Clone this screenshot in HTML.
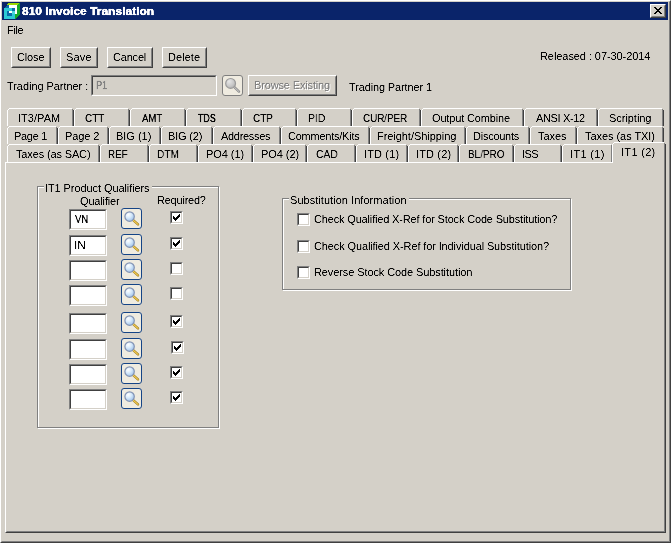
<!DOCTYPE html>
<html><head><meta charset="utf-8"><title>810 Invoice Translation</title>
<style>
html,body{margin:0;padding:0;}
body{width:671px;height:543px;overflow:hidden;background:#D4D0C8;position:relative;font-family:"Liberation Sans",sans-serif;font-size:11px;color:#000;}
span.t{will-change:transform;filter:url(#thr);}
div,span{position:absolute;box-sizing:border-box;white-space:nowrap;}
.t{line-height:13px;height:13px;}
.btn{background:#D4D0C8;border:1px solid;border-color:#fff #404040 #404040 #fff;}
.btn:before{content:"";position:absolute;left:0;top:0;right:0;bottom:0;border:1px solid;border-color:#D4D0C8 #808080 #808080 #D4D0C8;}
.sunk{background:#fff;border:1px solid;border-color:#808080 #fff #fff #808080;}
.sunk:before{content:"";position:absolute;left:0;top:0;right:0;bottom:0;border:1px solid;border-color:#404040 #D4D0C8 #D4D0C8 #404040;}
.tab{height:18px;background:#D4D0C8;}
.tab i{position:absolute;display:block;}
.grp{border:1px solid #808080;box-shadow:1px 1px 0 #fff, inset 1px 1px 0 #fff;}
.cb{width:13px;height:13px;}
.mag{width:21px;height:21px;border:1px solid #154486;border-radius:3px;background:#EFEBE0;}
.mag svg{position:absolute;left:-1px;top:-1px;}
</style></head><body>
<svg width="0" height="0" style="position:absolute"><filter id="thr" x="-10%" y="-20%" width="120%" height="140%" color-interpolation-filters="sRGB"><feComponentTransfer><feFuncA type="table" tableValues="0 0.1 0.95 1"/></feComponentTransfer></filter><radialGradient id="gb" cx="0.35" cy="0.3" r="0.8"><stop offset="0" stop-color="#FFFFFF"/><stop offset="0.45" stop-color="#D6E9FB"/><stop offset="1" stop-color="#94BAE6"/></radialGradient><radialGradient id="gg" cx="0.35" cy="0.3" r="0.8"><stop offset="0" stop-color="#E6E6E6"/><stop offset="0.6" stop-color="#C8C8C8"/><stop offset="1" stop-color="#ABABAB"/></radialGradient></svg>

<div style="left:0;top:0;width:671px;height:543px;border:1px solid;border-color:#fff #404040 #404040 #fff;"></div>
<div style="left:1px;top:1px;width:669px;height:541px;border:1px solid;border-color:#D4D0C8 #808080 #808080 #D4D0C8;"></div>
<div style="left:2px;top:2px;width:666px;height:18px;background:#0A246A;"></div>
<svg style="position:absolute;left:4px;top:3px" width="16" height="16" viewBox="0 0 16 16" shape-rendering="crispEdges">
<polygon points="0,5 3,2 5,2 5,5" fill="#0A6CA8"/>
<polygon points="3,2 4,0 15,0 13,2" fill="#9BD800"/>
<polygon points="13,2 15,0 16,0 16,11 11,16 11,11 13,11" fill="#15A82A"/>
<rect x="0" y="5" width="11" height="11" fill="#2CCBD6"/>
<rect x="5" y="2" width="8" height="3" fill="#fff"/>
<rect x="11" y="5" width="2" height="6" fill="#fff"/>
<rect x="3" y="8" width="5" height="5" fill="#0A6CA8"/>
<rect x="8" y="5" width="3" height="3" fill="#0A6CA8"/>
<rect x="8" y="8" width="3" height="3" fill="#4FD6DE"/>
<rect x="5" y="8" width="3" height="2" fill="#fff"/>
</svg>
<span class="t" style="left:22.00px;top:5px;transform:scaleX(1.0917);transform-origin:0 0;font-weight:bold;color:#fff;-webkit-text-stroke:0.3px #fff;">810 Invoice Translation</span>
<div class="btn" style="left:650px;top:4px;width:16px;height:14px;"></div>
<svg style="position:absolute;left:654px;top:7px" width="8" height="7" viewBox="0 0 8 7" shape-rendering="crispEdges"><path d="M0 0h2v1h1v1h2v-1h1v-1h2v1h-1v1h-1v1h-1v1h1v1h1v1h1v1h-2v-1h-1v-1h-2v1h-1v1h-2v-1h1v-1h1v-1h1v-1h-1v-1h-1v-1h-1z" fill="#000"/></svg>
<span class="t" style="left:7.00px;top:24px;letter-spacing:-0.333px;">File</span>
<div class="btn" style="left:11px;top:47px;width:40px;height:21px;"></div>
<span class="t" style="left:16.50px;top:51px;letter-spacing:-0.153px;">Close</span>
<div class="btn" style="left:60px;top:47px;width:38px;height:21px;"></div>
<span class="t" style="left:65.80px;top:51px;letter-spacing:0.207px;">Save</span>
<div class="btn" style="left:107px;top:47px;width:46px;height:21px;"></div>
<span class="t" style="left:112.70px;top:51px;letter-spacing:-0.186px;">Cancel</span>
<div class="btn" style="left:162px;top:47px;width:45px;height:21px;"></div>
<span class="t" style="left:168.00px;top:51px;letter-spacing:0.046px;">Delete</span>
<span class="t" style="left:540.00px;top:50px;letter-spacing:-0.073px;">Released : 07-30-2014</span>
<span class="t" style="left:7.00px;top:80px;letter-spacing:-0.053px;">Trading Partner :</span>
<div class="sunk" style="left:91px;top:75px;width:126px;height:21px;background:#D4D0C8;"></div>
<span class="t" style="left:96.00px;top:79px;transform:scaleX(0.8333);transform-origin:0 0;-webkit-text-stroke:0.27px;color:#808080;">P1</span>
<div class="mag" style="left:222px;top:75px;border-color:#7F7F7F;"><svg width="21" height="21" viewBox="0 0 21 21"><line x1="12.4" y1="12.2" x2="17" y2="16.6" stroke="#8C8C8C" stroke-width="2.4" stroke-linecap="round"/><line x1="12.4" y1="12.2" x2="17" y2="16.6" stroke="#D0D0D0" stroke-width="1" stroke-linecap="round"/><circle cx="8.6" cy="8.4" r="4.9" fill="url(#gg)" stroke="#9A9A9A" stroke-width="1.2"/></svg></div>
<div class="btn" style="left:248px;top:75px;width:89px;height:21px;"></div>
<span class="t" style="left:254.00px;top:79px;letter-spacing:-0.148px;color:#808080;text-shadow:1px 1px 0 #fff;">Browse Existing</span>
<span class="t" style="left:349.00px;top:81px;letter-spacing:-0.135px;">Trading Partner 1</span>
<div class="tab" style="left:7px;top:108px;width:67px;height:18px;"><i style="left:0;top:2px;width:1px;bottom:0px;background:#fff"></i><i style="left:1px;top:1px;width:1px;height:1px;background:#fff"></i><i style="left:2px;top:0;right:2px;height:1px;background:#fff"></i><i style="right:1px;top:1px;width:1px;bottom:0;background:#808080"></i><i style="right:0;top:2px;width:1px;bottom:0;background:#404040"></i></div>
<span class="t" style="left:18.00px;top:112px;letter-spacing:0.038px;z-index:6;">IT3/PAM</span>
<div class="tab" style="left:74px;top:108px;width:56px;height:18px;"><i style="left:0;top:2px;width:1px;bottom:0px;background:#fff"></i><i style="left:1px;top:1px;width:1px;height:1px;background:#fff"></i><i style="left:2px;top:0;right:2px;height:1px;background:#fff"></i><i style="right:1px;top:1px;width:1px;bottom:0;background:#808080"></i><i style="right:0;top:2px;width:1px;bottom:0;background:#404040"></i></div>
<span class="t" style="left:84.50px;top:112px;transform:scaleX(0.9000);transform-origin:0 0;-webkit-text-stroke:0.16px;z-index:6;">CTT</span>
<div class="tab" style="left:130px;top:108px;width:56px;height:18px;"><i style="left:0;top:2px;width:1px;bottom:0px;background:#fff"></i><i style="left:1px;top:1px;width:1px;height:1px;background:#fff"></i><i style="left:2px;top:0;right:2px;height:1px;background:#fff"></i><i style="right:1px;top:1px;width:1px;bottom:0;background:#808080"></i><i style="right:0;top:2px;width:1px;bottom:0;background:#404040"></i></div>
<span class="t" style="left:142.00px;top:112px;transform:scaleX(0.8696);transform-origin:0 0;-webkit-text-stroke:0.21px;z-index:6;">AMT</span>
<div class="tab" style="left:186px;top:108px;width:56px;height:18px;"><i style="left:0;top:2px;width:1px;bottom:0px;background:#fff"></i><i style="left:1px;top:1px;width:1px;height:1px;background:#fff"></i><i style="left:2px;top:0;right:2px;height:1px;background:#fff"></i><i style="right:1px;top:1px;width:1px;bottom:0;background:#808080"></i><i style="right:0;top:2px;width:1px;bottom:0;background:#404040"></i></div>
<span class="t" style="left:198.30px;top:112px;transform:scaleX(0.8042);transform-origin:0 0;-webkit-text-stroke:0.31px;z-index:6;">TDS</span>
<div class="tab" style="left:242px;top:108px;width:55px;height:18px;"><i style="left:0;top:2px;width:1px;bottom:0px;background:#fff"></i><i style="left:1px;top:1px;width:1px;height:1px;background:#fff"></i><i style="left:2px;top:0;right:2px;height:1px;background:#fff"></i><i style="right:1px;top:1px;width:1px;bottom:0;background:#808080"></i><i style="right:0;top:2px;width:1px;bottom:0;background:#404040"></i></div>
<span class="t" style="left:252.80px;top:112px;transform:scaleX(0.9000);transform-origin:0 0;-webkit-text-stroke:0.16px;z-index:6;">CTP</span>
<div class="tab" style="left:297px;top:108px;width:55px;height:18px;"><i style="left:0;top:2px;width:1px;bottom:0px;background:#fff"></i><i style="left:1px;top:1px;width:1px;height:1px;background:#fff"></i><i style="left:2px;top:0;right:2px;height:1px;background:#fff"></i><i style="right:1px;top:1px;width:1px;bottom:0;background:#808080"></i><i style="right:0;top:2px;width:1px;bottom:0;background:#404040"></i></div>
<span class="t" style="left:308.00px;top:112px;transform:scaleX(0.9412);transform-origin:0 0;-webkit-text-stroke:0.09px;z-index:6;">PID</span>
<div class="tab" style="left:352px;top:108px;width:69px;height:18px;"><i style="left:0;top:2px;width:1px;bottom:0px;background:#fff"></i><i style="left:1px;top:1px;width:1px;height:1px;background:#fff"></i><i style="left:2px;top:0;right:2px;height:1px;background:#fff"></i><i style="right:1px;top:1px;width:1px;bottom:0;background:#808080"></i><i style="right:0;top:2px;width:1px;bottom:0;background:#404040"></i></div>
<span class="t" style="left:363.00px;top:112px;transform:scaleX(0.8929);transform-origin:0 0;-webkit-text-stroke:0.17px;z-index:6;">CUR/PER</span>
<div class="tab" style="left:421px;top:108px;width:103px;height:18px;"><i style="left:0;top:2px;width:1px;bottom:0px;background:#fff"></i><i style="left:1px;top:1px;width:1px;height:1px;background:#fff"></i><i style="left:2px;top:0;right:2px;height:1px;background:#fff"></i><i style="right:1px;top:1px;width:1px;bottom:0;background:#808080"></i><i style="right:0;top:2px;width:1px;bottom:0;background:#404040"></i></div>
<span class="t" style="left:432.00px;top:112px;letter-spacing:-0.154px;z-index:6;">Output Combine</span>
<div class="tab" style="left:524px;top:108px;width:74px;height:18px;"><i style="left:0;top:2px;width:1px;bottom:0px;background:#fff"></i><i style="left:1px;top:1px;width:1px;height:1px;background:#fff"></i><i style="left:2px;top:0;right:2px;height:1px;background:#fff"></i><i style="right:1px;top:1px;width:1px;bottom:0;background:#808080"></i><i style="right:0;top:2px;width:1px;bottom:0;background:#404040"></i></div>
<span class="t" style="left:536.00px;top:112px;letter-spacing:-0.346px;z-index:6;">ANSI X-12</span>
<div class="tab" style="left:598px;top:108px;width:66px;height:18px;"><i style="left:0;top:2px;width:1px;bottom:0px;background:#fff"></i><i style="left:1px;top:1px;width:1px;height:1px;background:#fff"></i><i style="left:2px;top:0;right:2px;height:1px;background:#fff"></i><i style="right:1px;top:1px;width:1px;bottom:0;background:#808080"></i><i style="right:0;top:2px;width:1px;bottom:0;background:#404040"></i></div>
<span class="t" style="left:608.60px;top:112px;letter-spacing:-0.039px;z-index:6;">Scripting</span>
<div class="tab" style="left:7px;top:126px;width:51px;height:18px;"><i style="left:0;top:2px;width:1px;bottom:0px;background:#fff"></i><i style="left:1px;top:1px;width:1px;height:1px;background:#fff"></i><i style="left:2px;top:0;right:2px;height:1px;background:#fff"></i><i style="right:1px;top:1px;width:1px;bottom:0;background:#808080"></i><i style="right:0;top:2px;width:1px;bottom:0;background:#404040"></i></div>
<span class="t" style="left:14.00px;top:130px;letter-spacing:-0.292px;z-index:6;">Page 1</span>
<div class="tab" style="left:58px;top:126px;width:51px;height:18px;"><i style="left:0;top:2px;width:1px;bottom:0px;background:#fff"></i><i style="left:1px;top:1px;width:1px;height:1px;background:#fff"></i><i style="left:2px;top:0;right:2px;height:1px;background:#fff"></i><i style="right:1px;top:1px;width:1px;bottom:0;background:#808080"></i><i style="right:0;top:2px;width:1px;bottom:0;background:#404040"></i></div>
<span class="t" style="left:64.50px;top:130px;letter-spacing:-0.124px;z-index:6;">Page 2</span>
<div class="tab" style="left:109px;top:126px;width:52px;height:18px;"><i style="left:0;top:2px;width:1px;bottom:0px;background:#fff"></i><i style="left:1px;top:1px;width:1px;height:1px;background:#fff"></i><i style="left:2px;top:0;right:2px;height:1px;background:#fff"></i><i style="right:1px;top:1px;width:1px;bottom:0;background:#808080"></i><i style="right:0;top:2px;width:1px;bottom:0;background:#404040"></i></div>
<span class="t" style="left:116.00px;top:130px;letter-spacing:-0.012px;z-index:6;">BIG (1)</span>
<div class="tab" style="left:161px;top:126px;width:52px;height:18px;"><i style="left:0;top:2px;width:1px;bottom:0px;background:#fff"></i><i style="left:1px;top:1px;width:1px;height:1px;background:#fff"></i><i style="left:2px;top:0;right:2px;height:1px;background:#fff"></i><i style="right:1px;top:1px;width:1px;bottom:0;background:#808080"></i><i style="right:0;top:2px;width:1px;bottom:0;background:#404040"></i></div>
<span class="t" style="left:168.00px;top:130px;letter-spacing:-0.167px;z-index:6;">BIG (2)</span>
<div class="tab" style="left:213px;top:126px;width:68px;height:18px;"><i style="left:0;top:2px;width:1px;bottom:0px;background:#fff"></i><i style="left:1px;top:1px;width:1px;height:1px;background:#fff"></i><i style="left:2px;top:0;right:2px;height:1px;background:#fff"></i><i style="right:1px;top:1px;width:1px;bottom:0;background:#808080"></i><i style="right:0;top:2px;width:1px;bottom:0;background:#404040"></i></div>
<span class="t" style="left:220.70px;top:130px;letter-spacing:-0.307px;z-index:6;">Addresses</span>
<div class="tab" style="left:281px;top:126px;width:89px;height:18px;"><i style="left:0;top:2px;width:1px;bottom:0px;background:#fff"></i><i style="left:1px;top:1px;width:1px;height:1px;background:#fff"></i><i style="left:2px;top:0;right:2px;height:1px;background:#fff"></i><i style="right:1px;top:1px;width:1px;bottom:0;background:#808080"></i><i style="right:0;top:2px;width:1px;bottom:0;background:#404040"></i></div>
<span class="t" style="left:287.80px;top:130px;letter-spacing:-0.238px;z-index:6;">Comments/Kits</span>
<div class="tab" style="left:370px;top:126px;width:96px;height:18px;"><i style="left:0;top:2px;width:1px;bottom:0px;background:#fff"></i><i style="left:1px;top:1px;width:1px;height:1px;background:#fff"></i><i style="left:2px;top:0;right:2px;height:1px;background:#fff"></i><i style="right:1px;top:1px;width:1px;bottom:0;background:#808080"></i><i style="right:0;top:2px;width:1px;bottom:0;background:#404040"></i></div>
<span class="t" style="left:377.20px;top:130px;letter-spacing:-0.051px;z-index:6;">Freight/Shipping</span>
<div class="tab" style="left:466px;top:126px;width:64px;height:18px;"><i style="left:0;top:2px;width:1px;bottom:0px;background:#fff"></i><i style="left:1px;top:1px;width:1px;height:1px;background:#fff"></i><i style="left:2px;top:0;right:2px;height:1px;background:#fff"></i><i style="right:1px;top:1px;width:1px;bottom:0;background:#808080"></i><i style="right:0;top:2px;width:1px;bottom:0;background:#404040"></i></div>
<span class="t" style="left:473.20px;top:130px;letter-spacing:-0.250px;z-index:6;">Discounts</span>
<div class="tab" style="left:530px;top:126px;width:47px;height:18px;"><i style="left:0;top:2px;width:1px;bottom:0px;background:#fff"></i><i style="left:1px;top:1px;width:1px;height:1px;background:#fff"></i><i style="left:2px;top:0;right:2px;height:1px;background:#fff"></i><i style="right:1px;top:1px;width:1px;bottom:0;background:#808080"></i><i style="right:0;top:2px;width:1px;bottom:0;background:#404040"></i></div>
<span class="t" style="left:538.10px;top:130px;letter-spacing:-0.040px;z-index:6;">Taxes</span>
<div class="tab" style="left:577px;top:126px;width:87px;height:18px;"><i style="left:0;top:2px;width:1px;bottom:0px;background:#fff"></i><i style="left:1px;top:1px;width:1px;height:1px;background:#fff"></i><i style="left:2px;top:0;right:2px;height:1px;background:#fff"></i><i style="right:1px;top:1px;width:1px;bottom:0;background:#808080"></i><i style="right:0;top:2px;width:1px;bottom:0;background:#404040"></i></div>
<span class="t" style="left:585.40px;top:130px;letter-spacing:-0.053px;z-index:6;">Taxes (as TXI)</span>
<div class="tab" style="left:7px;top:144px;width:93px;height:18px;"><i style="left:0;top:2px;width:1px;bottom:0px;background:#fff"></i><i style="left:1px;top:1px;width:1px;height:1px;background:#fff"></i><i style="left:2px;top:0;right:2px;height:1px;background:#fff"></i><i style="right:1px;top:1px;width:1px;bottom:0;background:#808080"></i><i style="right:0;top:2px;width:1px;bottom:0;background:#404040"></i></div>
<span class="t" style="left:16.00px;top:148px;letter-spacing:-0.142px;z-index:6;">Taxes (as SAC)</span>
<div class="tab" style="left:100px;top:144px;width:49px;height:18px;"><i style="left:0;top:2px;width:1px;bottom:0px;background:#fff"></i><i style="left:1px;top:1px;width:1px;height:1px;background:#fff"></i><i style="left:2px;top:0;right:2px;height:1px;background:#fff"></i><i style="right:1px;top:1px;width:1px;bottom:0;background:#808080"></i><i style="right:0;top:2px;width:1px;bottom:0;background:#404040"></i></div>
<span class="t" style="left:108.00px;top:148px;transform:scaleX(0.8935);transform-origin:0 0;-webkit-text-stroke:0.17px;z-index:6;">REF</span>
<div class="tab" style="left:149px;top:144px;width:49px;height:18px;"><i style="left:0;top:2px;width:1px;bottom:0px;background:#fff"></i><i style="left:1px;top:1px;width:1px;height:1px;background:#fff"></i><i style="left:2px;top:0;right:2px;height:1px;background:#fff"></i><i style="right:1px;top:1px;width:1px;bottom:0;background:#808080"></i><i style="right:0;top:2px;width:1px;bottom:0;background:#404040"></i></div>
<span class="t" style="left:156.80px;top:148px;transform:scaleX(0.9202);transform-origin:0 0;-webkit-text-stroke:0.13px;z-index:6;">DTM</span>
<div class="tab" style="left:198px;top:144px;width:55px;height:18px;"><i style="left:0;top:2px;width:1px;bottom:0px;background:#fff"></i><i style="left:1px;top:1px;width:1px;height:1px;background:#fff"></i><i style="left:2px;top:0;right:2px;height:1px;background:#fff"></i><i style="right:1px;top:1px;width:1px;bottom:0;background:#808080"></i><i style="right:0;top:2px;width:1px;bottom:0;background:#404040"></i></div>
<span class="t" style="left:205.70px;top:148px;letter-spacing:-0.063px;z-index:6;">PO4 (1)</span>
<div class="tab" style="left:253px;top:144px;width:54px;height:18px;"><i style="left:0;top:2px;width:1px;bottom:0px;background:#fff"></i><i style="left:1px;top:1px;width:1px;height:1px;background:#fff"></i><i style="left:2px;top:0;right:2px;height:1px;background:#fff"></i><i style="right:1px;top:1px;width:1px;bottom:0;background:#808080"></i><i style="right:0;top:2px;width:1px;bottom:0;background:#404040"></i></div>
<span class="t" style="left:260.80px;top:148px;letter-spacing:-0.063px;z-index:6;">PO4 (2)</span>
<div class="tab" style="left:307px;top:144px;width:49px;height:18px;"><i style="left:0;top:2px;width:1px;bottom:0px;background:#fff"></i><i style="left:1px;top:1px;width:1px;height:1px;background:#fff"></i><i style="left:2px;top:0;right:2px;height:1px;background:#fff"></i><i style="right:1px;top:1px;width:1px;bottom:0;background:#808080"></i><i style="right:0;top:2px;width:1px;bottom:0;background:#404040"></i></div>
<span class="t" style="left:315.70px;top:148px;transform:scaleX(0.9376);transform-origin:0 0;-webkit-text-stroke:0.10px;z-index:6;">CAD</span>
<div class="tab" style="left:356px;top:144px;width:52px;height:18px;"><i style="left:0;top:2px;width:1px;bottom:0px;background:#fff"></i><i style="left:1px;top:1px;width:1px;height:1px;background:#fff"></i><i style="left:2px;top:0;right:2px;height:1px;background:#fff"></i><i style="right:1px;top:1px;width:1px;bottom:0;background:#808080"></i><i style="right:0;top:2px;width:1px;bottom:0;background:#404040"></i></div>
<span class="t" style="left:363.80px;top:148px;letter-spacing:0.140px;z-index:6;">ITD (1)</span>
<div class="tab" style="left:408px;top:144px;width:51px;height:18px;"><i style="left:0;top:2px;width:1px;bottom:0px;background:#fff"></i><i style="left:1px;top:1px;width:1px;height:1px;background:#fff"></i><i style="left:2px;top:0;right:2px;height:1px;background:#fff"></i><i style="right:1px;top:1px;width:1px;bottom:0;background:#808080"></i><i style="right:0;top:2px;width:1px;bottom:0;background:#404040"></i></div>
<span class="t" style="left:415.90px;top:148px;letter-spacing:0.140px;z-index:6;">ITD (2)</span>
<div class="tab" style="left:459px;top:144px;width:55px;height:18px;"><i style="left:0;top:2px;width:1px;bottom:0px;background:#fff"></i><i style="left:1px;top:1px;width:1px;height:1px;background:#fff"></i><i style="left:2px;top:0;right:2px;height:1px;background:#fff"></i><i style="right:1px;top:1px;width:1px;bottom:0;background:#808080"></i><i style="right:0;top:2px;width:1px;bottom:0;background:#404040"></i></div>
<span class="t" style="left:468.10px;top:148px;transform:scaleX(0.9054);transform-origin:0 0;-webkit-text-stroke:0.15px;z-index:6;">BL/PRO</span>
<div class="tab" style="left:514px;top:144px;width:48px;height:18px;"><i style="left:0;top:2px;width:1px;bottom:0px;background:#fff"></i><i style="left:1px;top:1px;width:1px;height:1px;background:#fff"></i><i style="left:2px;top:0;right:2px;height:1px;background:#fff"></i><i style="right:1px;top:1px;width:1px;bottom:0;background:#808080"></i><i style="right:0;top:2px;width:1px;bottom:0;background:#404040"></i></div>
<span class="t" style="left:522.00px;top:148px;letter-spacing:-0.580px;z-index:6;">ISS</span>
<div class="tab" style="left:562px;top:144px;width:51px;height:18px;"><i style="left:0;top:2px;width:1px;bottom:0px;background:#fff"></i><i style="left:1px;top:1px;width:1px;height:1px;background:#fff"></i><i style="left:2px;top:0;right:2px;height:1px;background:#fff"></i><i style="right:1px;top:1px;width:1px;bottom:0;background:#808080"></i><i style="right:0;top:2px;width:1px;bottom:0;background:#404040"></i></div>
<span class="t" style="left:569.70px;top:148px;letter-spacing:0.333px;z-index:6;">IT1 (1)</span>
<div style="left:5px;top:162px;width:661px;height:371px;border:1px solid;border-color:#fff #404040 #404040 #fff;"></div>
<div style="left:6px;top:163px;width:659px;height:369px;border:1px solid;border-color:#D4D0C8 #808080 #808080 #D4D0C8;"></div>
<div class="tab" style="left:612px;top:142px;width:54px;height:22px;z-index:5;"><i style="left:0;top:2px;width:1px;bottom:1px;background:#fff"></i><i style="left:1px;top:1px;width:1px;height:1px;background:#fff"></i><i style="left:2px;top:0;right:2px;height:1px;background:#fff"></i><i style="right:1px;top:1px;width:1px;bottom:0;background:#808080"></i><i style="right:0;top:2px;width:1px;bottom:0;background:#404040"></i></div>
<span class="t" style="left:621.00px;top:146px;letter-spacing:0.308px;z-index:6;">IT1 (2)</span>
<div class="grp" style="left:37px;top:186px;width:182px;height:242px;"></div>
<div style="left:44px;top:184px;width:108px;height:6px;background:#D4D0C8;"></div>
<span class="t" style="left:45.00px;top:182px;letter-spacing:-0.084px;">IT1 Product Qualifiers</span>
<span class="t" style="left:80.00px;top:195px;letter-spacing:-0.154px;">Qualifier</span>
<span class="t" style="left:157.00px;top:194px;letter-spacing:-0.221px;">Required?</span>
<div class="sunk" style="left:69px;top:209px;width:38px;height:21px;"></div>
<div class="mag" style="left:121px;top:208px;"><svg width="21" height="21" viewBox="0 0 21 21"><line x1="12.2" y1="12.2" x2="17" y2="16.4" stroke="#9A7A20" stroke-width="2.4" stroke-linecap="round"/><line x1="12.2" y1="12.2" x2="17" y2="16.4" stroke="#F4CC50" stroke-width="1.2" stroke-linecap="round"/><circle cx="8.6" cy="8.6" r="4.7" fill="url(#gb)" stroke="#8494B4" stroke-width="1.2"/></svg></div>
<div class="sunk cb" style="left:170px;top:211px;"><svg style="position:absolute;left:2px;top:2px" width="7" height="7" viewBox="0 0 7 7" shape-rendering="crispEdges"><path d="M6 0h1v3h-1zM5 1h1v3h-1zM4 2h1v3h-1zM3 3h1v3h-1zM2 4h1v3h-1zM1 3h1v3h-1zM0 2h1v3h-1z" fill="#000"/></svg></div>
<div class="sunk" style="left:69px;top:235px;width:38px;height:21px;"></div>
<div class="mag" style="left:121px;top:234px;"><svg width="21" height="21" viewBox="0 0 21 21"><line x1="12.2" y1="12.2" x2="17" y2="16.4" stroke="#9A7A20" stroke-width="2.4" stroke-linecap="round"/><line x1="12.2" y1="12.2" x2="17" y2="16.4" stroke="#F4CC50" stroke-width="1.2" stroke-linecap="round"/><circle cx="8.6" cy="8.6" r="4.7" fill="url(#gb)" stroke="#8494B4" stroke-width="1.2"/></svg></div>
<div class="sunk cb" style="left:170px;top:237px;"><svg style="position:absolute;left:2px;top:2px" width="7" height="7" viewBox="0 0 7 7" shape-rendering="crispEdges"><path d="M6 0h1v3h-1zM5 1h1v3h-1zM4 2h1v3h-1zM3 3h1v3h-1zM2 4h1v3h-1zM1 3h1v3h-1zM0 2h1v3h-1z" fill="#000"/></svg></div>
<div class="sunk" style="left:69px;top:260px;width:38px;height:21px;"></div>
<div class="mag" style="left:121px;top:259px;"><svg width="21" height="21" viewBox="0 0 21 21"><line x1="12.2" y1="12.2" x2="17" y2="16.4" stroke="#9A7A20" stroke-width="2.4" stroke-linecap="round"/><line x1="12.2" y1="12.2" x2="17" y2="16.4" stroke="#F4CC50" stroke-width="1.2" stroke-linecap="round"/><circle cx="8.6" cy="8.6" r="4.7" fill="url(#gb)" stroke="#8494B4" stroke-width="1.2"/></svg></div>
<div class="sunk cb" style="left:170px;top:262px;"></div>
<div class="sunk" style="left:69px;top:285px;width:38px;height:21px;"></div>
<div class="mag" style="left:121px;top:284px;"><svg width="21" height="21" viewBox="0 0 21 21"><line x1="12.2" y1="12.2" x2="17" y2="16.4" stroke="#9A7A20" stroke-width="2.4" stroke-linecap="round"/><line x1="12.2" y1="12.2" x2="17" y2="16.4" stroke="#F4CC50" stroke-width="1.2" stroke-linecap="round"/><circle cx="8.6" cy="8.6" r="4.7" fill="url(#gb)" stroke="#8494B4" stroke-width="1.2"/></svg></div>
<div class="sunk cb" style="left:170px;top:287px;"></div>
<div class="sunk" style="left:69px;top:313px;width:38px;height:21px;"></div>
<div class="mag" style="left:121px;top:312px;"><svg width="21" height="21" viewBox="0 0 21 21"><line x1="12.2" y1="12.2" x2="17" y2="16.4" stroke="#9A7A20" stroke-width="2.4" stroke-linecap="round"/><line x1="12.2" y1="12.2" x2="17" y2="16.4" stroke="#F4CC50" stroke-width="1.2" stroke-linecap="round"/><circle cx="8.6" cy="8.6" r="4.7" fill="url(#gb)" stroke="#8494B4" stroke-width="1.2"/></svg></div>
<div class="sunk cb" style="left:170px;top:315px;"><svg style="position:absolute;left:2px;top:2px" width="7" height="7" viewBox="0 0 7 7" shape-rendering="crispEdges"><path d="M6 0h1v3h-1zM5 1h1v3h-1zM4 2h1v3h-1zM3 3h1v3h-1zM2 4h1v3h-1zM1 3h1v3h-1zM0 2h1v3h-1z" fill="#000"/></svg></div>
<div class="sunk" style="left:69px;top:339px;width:38px;height:21px;"></div>
<div class="mag" style="left:121px;top:338px;"><svg width="21" height="21" viewBox="0 0 21 21"><line x1="12.2" y1="12.2" x2="17" y2="16.4" stroke="#9A7A20" stroke-width="2.4" stroke-linecap="round"/><line x1="12.2" y1="12.2" x2="17" y2="16.4" stroke="#F4CC50" stroke-width="1.2" stroke-linecap="round"/><circle cx="8.6" cy="8.6" r="4.7" fill="url(#gb)" stroke="#8494B4" stroke-width="1.2"/></svg></div>
<div class="sunk cb" style="left:171px;top:341px;"><svg style="position:absolute;left:2px;top:2px" width="7" height="7" viewBox="0 0 7 7" shape-rendering="crispEdges"><path d="M6 0h1v3h-1zM5 1h1v3h-1zM4 2h1v3h-1zM3 3h1v3h-1zM2 4h1v3h-1zM1 3h1v3h-1zM0 2h1v3h-1z" fill="#000"/></svg></div>
<div class="sunk" style="left:69px;top:364px;width:38px;height:21px;"></div>
<div class="mag" style="left:121px;top:363px;"><svg width="21" height="21" viewBox="0 0 21 21"><line x1="12.2" y1="12.2" x2="17" y2="16.4" stroke="#9A7A20" stroke-width="2.4" stroke-linecap="round"/><line x1="12.2" y1="12.2" x2="17" y2="16.4" stroke="#F4CC50" stroke-width="1.2" stroke-linecap="round"/><circle cx="8.6" cy="8.6" r="4.7" fill="url(#gb)" stroke="#8494B4" stroke-width="1.2"/></svg></div>
<div class="sunk cb" style="left:170px;top:366px;"><svg style="position:absolute;left:2px;top:2px" width="7" height="7" viewBox="0 0 7 7" shape-rendering="crispEdges"><path d="M6 0h1v3h-1zM5 1h1v3h-1zM4 2h1v3h-1zM3 3h1v3h-1zM2 4h1v3h-1zM1 3h1v3h-1zM0 2h1v3h-1z" fill="#000"/></svg></div>
<div class="sunk" style="left:69px;top:389px;width:38px;height:21px;"></div>
<div class="mag" style="left:121px;top:388px;"><svg width="21" height="21" viewBox="0 0 21 21"><line x1="12.2" y1="12.2" x2="17" y2="16.4" stroke="#9A7A20" stroke-width="2.4" stroke-linecap="round"/><line x1="12.2" y1="12.2" x2="17" y2="16.4" stroke="#F4CC50" stroke-width="1.2" stroke-linecap="round"/><circle cx="8.6" cy="8.6" r="4.7" fill="url(#gb)" stroke="#8494B4" stroke-width="1.2"/></svg></div>
<div class="sunk cb" style="left:170px;top:391px;"><svg style="position:absolute;left:2px;top:2px" width="7" height="7" viewBox="0 0 7 7" shape-rendering="crispEdges"><path d="M6 0h1v3h-1zM5 1h1v3h-1zM4 2h1v3h-1zM3 3h1v3h-1zM2 4h1v3h-1zM1 3h1v3h-1zM0 2h1v3h-1z" fill="#000"/></svg></div>
<span class="t" style="left:75.00px;top:213px;transform:scaleX(0.8701);transform-origin:0 0;-webkit-text-stroke:0.21px;">VN</span>
<span class="t" style="left:74.00px;top:239px;transform:scaleX(1.0989);transform-origin:0 0;">IN</span>
<div class="grp" style="left:282px;top:198px;width:289px;height:92px;"></div>
<div style="left:289px;top:196px;width:120px;height:6px;background:#D4D0C8;"></div>
<span class="t" style="left:290.00px;top:194px;letter-spacing:0.043px;">Substitution Information</span>
<div class="sunk cb" style="left:297px;top:213px;"></div>
<span class="t" style="left:314.00px;top:213px;letter-spacing:-0.162px;">Check Qualified X-Ref for Stock Code Substitution?</span>
<div class="sunk cb" style="left:297px;top:240px;"></div>
<span class="t" style="left:314.00px;top:240px;letter-spacing:-0.119px;">Check Qualified X-Ref for Individual Substitution?</span>
<div class="sunk cb" style="left:297px;top:266px;"></div>
<span class="t" style="left:314.00px;top:266px;letter-spacing:-0.102px;">Reverse Stock Code Substitution</span>
</body></html>
